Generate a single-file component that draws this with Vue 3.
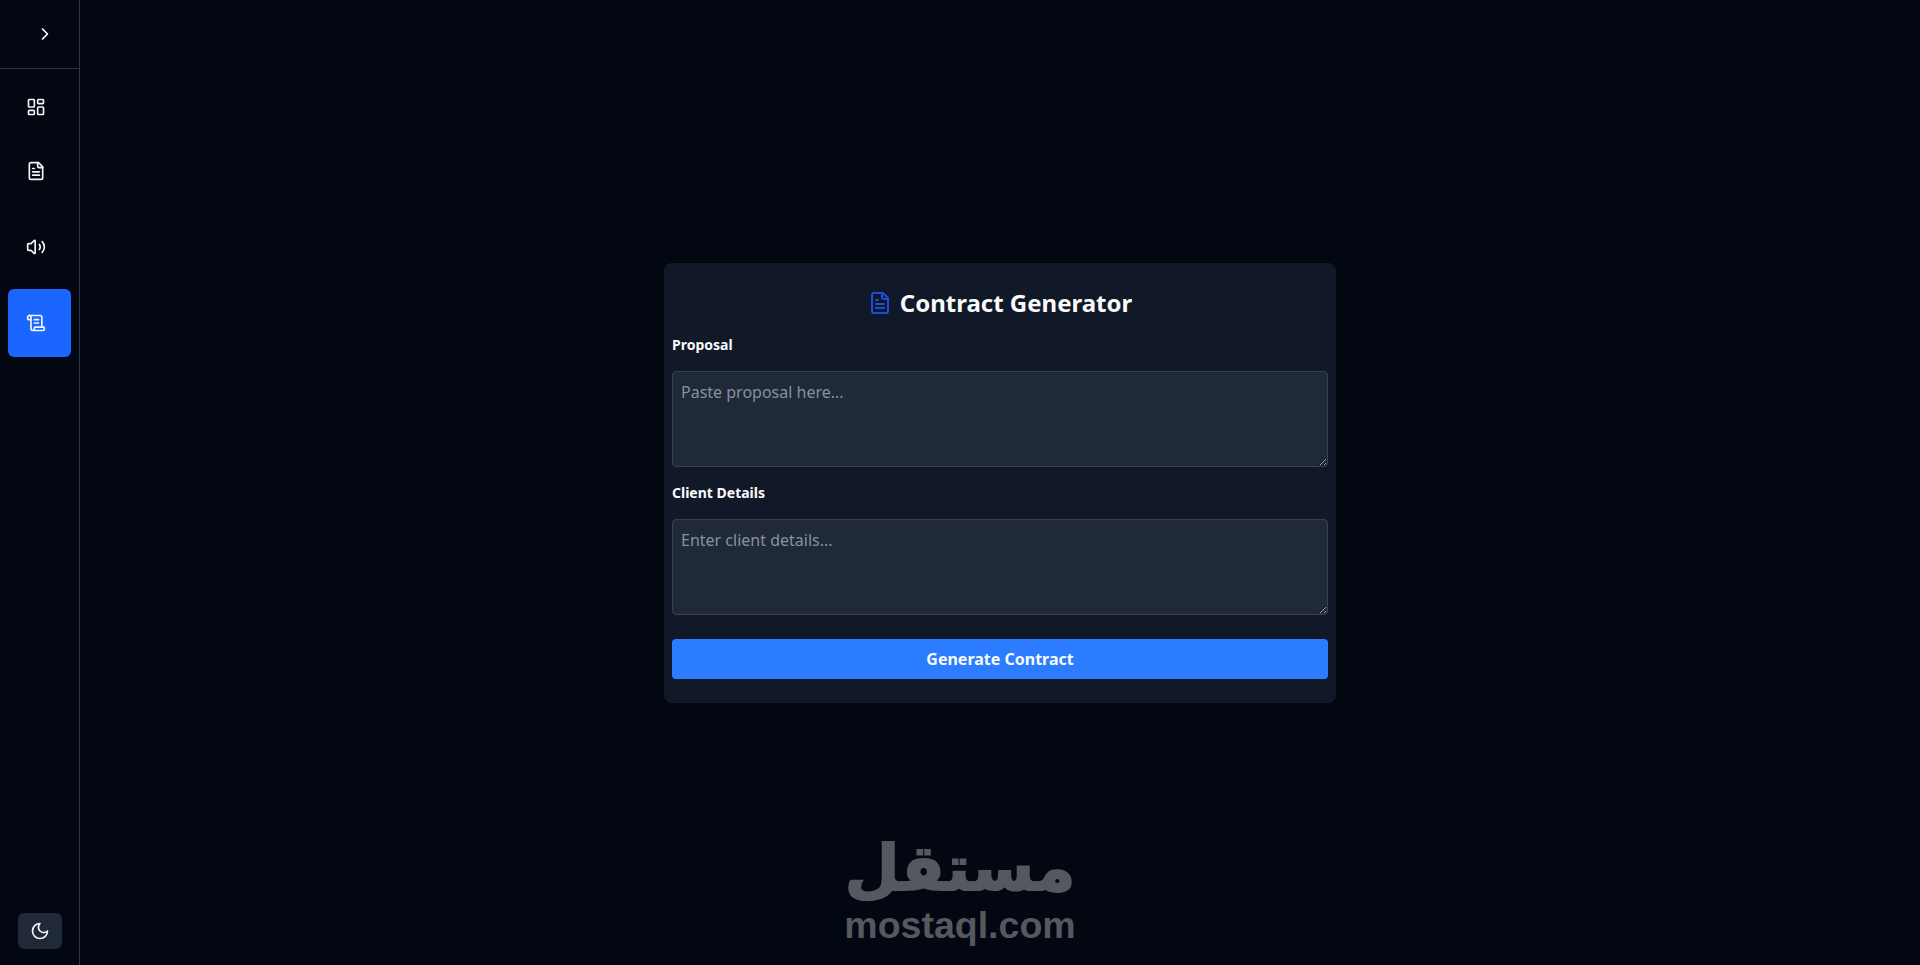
<script setup>
const navItems = [
  { key: 'dashboard', active: false },
  { key: 'file', active: false },
  { key: 'sound', active: false },
  { key: 'scroll', active: true }
]
</script>

<template>
  <div class="layout">
    <aside class="sidebar">
      <div class="side_head">
        <svg class="chev" width="20" height="20" viewBox="0 0 24 24"><path d="m9 18 6-6-6-6" /></svg>
      </div>
      <nav class="side_nav">
        <a
          v-for="item in navItems"
          :key="item.key"
          class="nav_item"
          :class="{ nav_active: item.active }"
        >
          <svg v-if="item.key === 'dashboard'" width="20" height="20" viewBox="0 0 24 24">
            <rect x="3" y="3" width="7" height="9" rx="1" />
            <rect x="14" y="3" width="7" height="5" rx="1" />
            <rect x="14" y="12" width="7" height="9" rx="1" />
            <rect x="3" y="16" width="7" height="5" rx="1" />
          </svg>
          <svg v-else-if="item.key === 'file'" width="20" height="20" viewBox="0 0 24 24">
            <path d="M15 2H6a2 2 0 0 0-2 2v16a2 2 0 0 0 2 2h12a2 2 0 0 0 2-2V7Z" />
            <path d="M14 2v4a2 2 0 0 0 2 2h4" />
            <path d="M10 9H8" /><path d="M16 13H8" /><path d="M16 17H8" />
          </svg>
          <svg v-else-if="item.key === 'sound'" width="20" height="20" viewBox="0 0 24 24">
            <path d="M11 4.702a.705.705 0 0 0-1.203-.498L6.413 7.587A1.4 1.4 0 0 1 5.416 8H3a1 1 0 0 0-1 1v6a1 1 0 0 0 1 1h2.416a1.4 1.4 0 0 1 .997.413l3.383 3.384A.705.705 0 0 0 11 19.298z" />
            <path d="M16 9a5 5 0 0 1 0 6" />
            <path d="M19.364 18.364a9 9 0 0 0 0-12.728" />
          </svg>
          <svg v-else width="20" height="20" viewBox="0 0 24 24">
            <path d="M15 12h-5" /><path d="M15 8h-5" />
            <path d="M19 17V5a2 2 0 0 0-2-2H4" />
            <path d="M8 21h12a2 2 0 0 0 2-2v-1a1 1 0 0 0-1-1H11a1 1 0 0 0-1 1v1a2 2 0 1 1-4 0V5a2 2 0 1 0-4 0v2a1 1 0 0 0 1 1h3" />
          </svg>
        </a>
      </nav>
      <div class="side_foot">
        <button class="theme_btn" type="button">
          <svg width="20" height="20" viewBox="0 0 24 24"><path d="M12 3a6 6 0 0 0 9 9 9 9 0 1 1-9-9Z" /></svg>
        </button>
      </div>
    </aside>

    <main class="content">
      <div class="card">
        <h1 class="title">
          <svg width="24" height="24" viewBox="0 0 24 24">
            <path d="M15 2H6a2 2 0 0 0-2 2v16a2 2 0 0 0 2 2h12a2 2 0 0 0 2-2V7Z" />
            <path d="M14 2v4a2 2 0 0 0 2 2h4" />
            <path d="M10 9H8" /><path d="M16 13H8" /><path d="M16 17H8" />
          </svg>
          Contract Generator
        </h1>
        <label class="field_label">Proposal</label>
        <textarea class="field" placeholder="Paste proposal here..."></textarea>
        <label class="field_label">Client Details</label>
        <textarea class="field" placeholder="Enter client details..."></textarea>
        <button class="submit" type="button">Generate Contract</button>
      </div>
    </main>

    <div class="watermark">
      <div class="wm_ar" dir="rtl">مستقل</div>
      <div class="wm_en">mostaql.com</div>
    </div>
  </div>
</template>

<style>
html, body {
  margin: 0;
  background: #030712;
}
</style>

<style scoped>
* {
  box-sizing: border-box;
}
.layout {
  display: flex;
  height: 965px;
  overflow: hidden;
  background: #030712;
  font-family: "Noto Sans", sans-serif;
  color: #fff;
}
svg {
  display: block;
  fill: none;
  stroke: currentColor;
  stroke-width: 2;
  stroke-linecap: round;
  stroke-linejoin: round;
}
.sidebar {
  width: 80px;
  flex: none;
  display: flex;
  flex-direction: column;
  border-right: 1px solid #2c3442;
}
.side_head {
  height: 69px;
  flex: none;
  padding-left: 35px;
  display: flex;
  align-items: center;
  border-bottom: 1px solid #2c3442;
}
.side_nav {
  flex: 1;
  padding: 6px 8px 0;
  display: flex;
  flex-direction: column;
}
.nav_item {
  height: 64px;
  padding-left: 18px;
  display: flex;
  align-items: center;
  border-radius: 6px;
  color: #f3f4f6;
}
.nav_item:nth-child(3) {
  height: 88px;
}
.nav_active {
  height: 68px;
  margin-top: -2px;
  background: #1a66ff;
}
.side_foot {
  padding: 0 17px 16px 18px;
}
.theme_btn {
  width: 44px;
  height: 36px;
  padding: 0;
  border: 0;
  border-radius: 6px;
  background: #1f2937;
  color: #f3f4f6;
  display: flex;
  align-items: center;
  justify-content: center;
}
.content {
  flex: 1;
  display: flex;
  align-items: center;
  justify-content: center;
}
.card {
  width: 672px;
  height: 440px;
  padding: 8px;
  border-radius: 8px;
  background: #111827;
  display: flex;
  flex-direction: column;
}
.title {
  margin: 0;
  height: 64px;
  display: flex;
  align-items: center;
  justify-content: center;
  gap: 8px;
  font-size: 24px;
  line-height: 32px;
  font-weight: 700;
  color: #f9fafb;
}
.title svg {
  color: #1d4ed8;
}
.field_label {
  height: 20px;
  font-size: 14px;
  line-height: 20px;
  font-weight: 700;
  color: #f9fafb;
}
.field {
  display: block;
  width: 100%;
  height: 96px;
  margin: 16px 0;
  padding: 8px;
  resize: vertical;
  border: 1px solid #374151;
  border-radius: 4px;
  outline: none;
  background: #1f2937;
  color: #f9fafb;
  font-family: inherit;
  font-size: 16px;
  line-height: 24px;
}
.field::placeholder {
  color: #9ca3af;
  opacity: .85;
}
.submit {
  height: 40px;
  margin-top: 8px;
  border: 0;
  border-radius: 4px;
  background: #2b7cff;
  color: #f9fafb;
  font-family: inherit;
  font-size: 16px;
  font-weight: 700;
}
.watermark {
  position: absolute;
  left: 840px;
  top: 834px;
  width: 240px;
  text-align: center;
  color: #55585f;
}
.wm_ar {
  height: 74px;
  font-family: "DejaVu Sans", sans-serif;
  font-size: 63px;
  line-height: 70px;
  font-weight: 700;
  -webkit-text-stroke: 2px #55585f;
}
.wm_en {
  font-family: "Liberation Sans", sans-serif;
  font-size: 37.5px;
  line-height: 34px;
  font-weight: 700;
}
</style>
